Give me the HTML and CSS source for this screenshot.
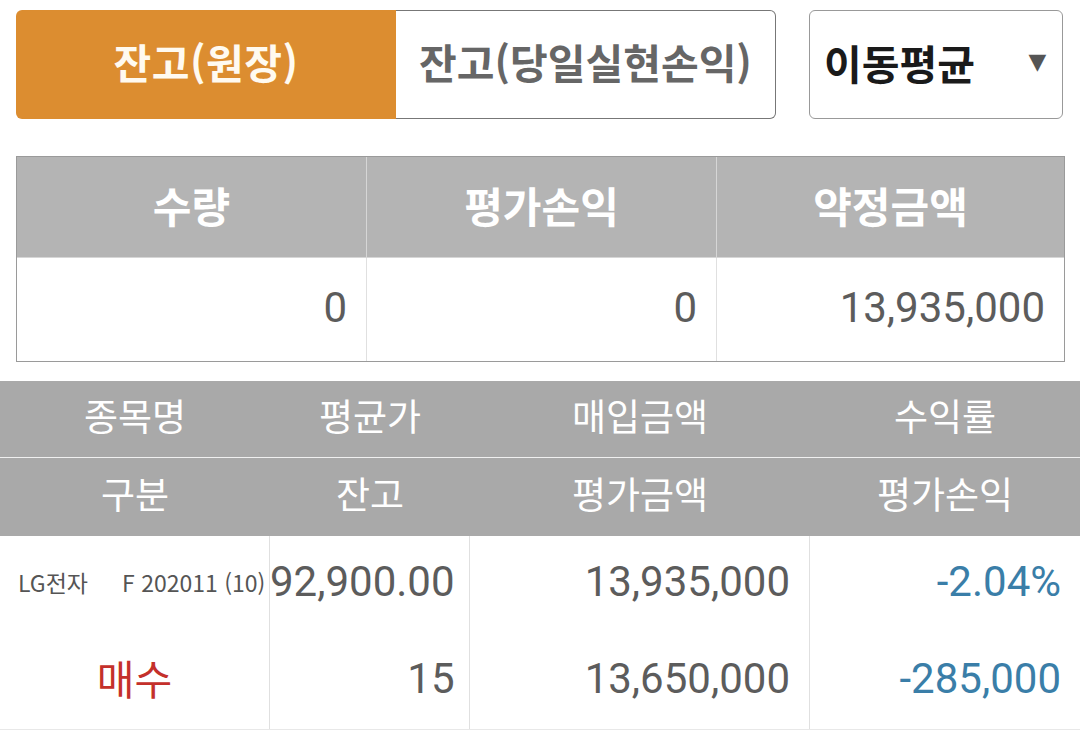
FILE: index.html
```html
<!DOCTYPE html>
<html lang="ko">
<head>
<meta charset="utf-8">
<title>잔고</title>
<link rel="stylesheet" href="styles.css">
</head>
<body>
<div class="page">
  <div class="topbar">
    <div class="seg">
      <div class="seg-btn active">잔고(원장)</div>
      <div class="seg-btn">잔고(당일실현손익)</div>
    </div>
    <div class="select">
      <span class="select-label">이동평균</span>
      <span class="select-arrow">▼</span>
    </div>
  </div>

  <div class="summary">
    <div class="s-head">수량</div>
    <div class="s-head">평가손익</div>
    <div class="s-head">약정금액</div>
    <div class="s-cell">0</div>
    <div class="s-cell">0</div>
    <div class="s-cell">13,935,000</div>
  </div>

  <div class="list">
    <div class="l-head">
      <div class="l-head-row">
        <span>종목명</span><span>평균가</span><span>매입금액</span><span>수익률</span>
      </div>
      <div class="l-head-row">
        <span>구분</span><span>잔고</span><span>평가금액</span><span>평가손익</span>
      </div>
    </div>
    <div class="l-body">
      <div class="l-col">
        <div class="l-cell name"><span>LG전자</span><span class="code">F 202011 (10)</span></div>
        <div class="l-cell buy">매수</div>
      </div>
      <div class="l-col">
        <div class="l-cell num">92,900.00</div>
        <div class="l-cell num">15</div>
      </div>
      <div class="l-col">
        <div class="l-cell num">13,935,000</div>
        <div class="l-cell num">13,650,000</div>
      </div>
      <div class="l-col last">
        <div class="l-cell num blue">-2.04%</div>
        <div class="l-cell num blue">-285,000</div>
      </div>
    </div>
  </div>
</div>
</body>
</html>
```

FILE: styles.css
```css
* { box-sizing: border-box; }
html, body { margin: 0; padding: 0; background: #fff; }
body {
  width: 1080px;
  height: 744px;
  overflow: hidden;
  font-family: "Noto Sans CJK KR", "Noto Sans", sans-serif;
}
.page { width: 1080px; }

.topbar {
  display: flex;
  padding: 10px 17px 0 16px;
  gap: 33px;
}
.seg {
  display: flex;
  width: 760px;
  height: 109px;
}
.seg-btn {
  flex: 0 0 380px;
  display: flex;
  align-items: center;
  justify-content: center;
  padding-bottom: 8px;
  font-size: 41px;
  font-weight: 700;
  color: #666;
  background: #fff;
  border: 1px solid #777;
  border-left: none;
  border-radius: 0 6px 6px 0;
}
.seg-btn.active {
  background: #dc8d30;
  color: #fffaf0;
  border: none;
  border-radius: 6px 0 0 6px;
  letter-spacing: 0.5px;
}
.select {
  flex: 1;
  height: 109px;
  border: 1px solid #999;
  border-radius: 6px;
  display: flex;
  align-items: center;
  justify-content: space-between;
  padding: 0 16px 6px 14px;
}
.select-label {
  font-size: 41px;
  font-weight: 700;
  color: #1a1a1a;
}
.select-arrow {
  font-family: "DejaVu Sans", sans-serif;
  font-size: 22px;
  color: #555;
  transform: scaleX(1.05);
}

.summary {
  margin: 37px 15px 0 16px;
  border: 1px solid #9a9a9a;
  display: grid;
  grid-template-columns: 349px 350px 1fr;
  grid-template-rows: 101px 103px;
}
.s-head {
  background: #b4b4b4;
  color: #fff;
  font-size: 42px;
  font-weight: 700;
  display: flex;
  align-items: center;
  justify-content: center;
  padding-bottom: 6px;
  border-left: 1px solid #d6d6d6;
  border-bottom: 1px solid #d6d6d6;
}
.s-cell {
  font-family: Roboto, "Noto Sans", sans-serif;
  font-size: 42px;
  color: #5c5c5c;
  display: flex;
  align-items: center;
  justify-content: flex-end;
  padding: 0 19px 4px 0;
  border-left: 1px solid #e0e0e0;
}
.s-head:nth-child(1), .s-cell:nth-child(4) { border-left: none; }

.list { margin-top: 19px; }
.l-head { background: #a9a9a9; }
.l-head-row {
  display: grid;
  grid-template-columns: 270px 200px 340px 1fr;
  height: 76px;
  align-items: center;
  color: #fff;
  font-size: 37px;
  text-align: center;
  padding-bottom: 8px;
}
.l-head-row + .l-head-row {
  border-top: 1px solid #f0f0f0;
  height: 79px;
}
.l-body {
  display: grid;
  grid-template-columns: 270px 200px 340px 1fr;
  border-bottom: 1px solid #e8e8e8;
}
.l-col {
  display: grid;
  grid-template-rows: 95px 98px;
  border-right: 1px solid #e0e0e0;
}
.l-col.last { border-right: none; }
.l-cell {
  display: flex;
  align-items: center;
  justify-content: flex-end;
  padding: 0 19px 4px 0;
  color: #5c5c5c;
}
.l-cell.num {
  font-family: Roboto, "Noto Sans", sans-serif;
  font-size: 42px;
}
.l-cell.name {
  justify-content: flex-start;
  padding: 0 0 4px 18px;
  font-size: 23px;
  white-space: nowrap;
  color: #555;
}
.l-cell.name .code { margin-left: 34px; }
.l-cell.buy {
  justify-content: center;
  padding: 0 0 6px 0;
  color: #c4302b;
  font-size: 41px;
  font-weight: 400;
}
.l-cell.blue { color: #3a7ea8; }
```
